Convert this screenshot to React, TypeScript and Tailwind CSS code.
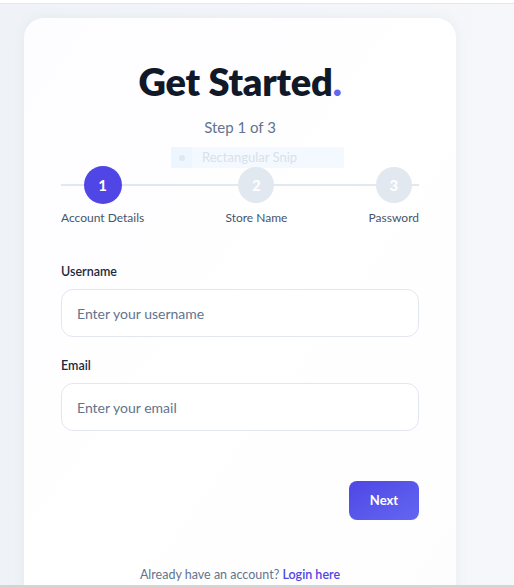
const steps = [
  { n: 1, label: 'Account Details', active: true },
  { n: 2, label: 'Store Name', active: false },
  { n: 3, label: 'Password', active: false },
]

function Field({ label, placeholder }: { label: string; placeholder: string }) {
  return (
    <div>
      <label className="block text-[12.5px] font-semibold text-slate-800 leading-4">
        {label}
      </label>
      <input
        placeholder={placeholder}
        className="mt-[9px] block w-full h-[48px] rounded-xl border border-[#e2e6f0] bg-white px-[15px] text-[14px] text-slate-700 placeholder:text-slate-500 outline-none"
      />
    </div>
  )
}

export default function App() {
  return (
    <div
      className="h-[587px] w-[514px] overflow-hidden flex flex-col bg-white"
      style={{ fontFamily: 'Lato, "Noto Sans", sans-serif' }}
    >
      <div className="h-[3px] shrink-0 border-b border-[#e5e7eb] box-content" />
      <div className="flex-1 min-h-0 overflow-hidden bg-gradient-to-r from-[#eff3f7] via-[#f2f5f9] to-[#f5f7fa] pl-6 pt-[14px]">
        <div className="relative w-[432px] h-[600px] rounded-[20px] bg-gradient-to-br from-[#fdfcff] via-white to-[#fefdfe] shadow-[0_0_12px_rgba(148,163,184,0.12)] px-[37px] pt-[41px]">
          <h1 className="text-center text-[38px] leading-[44px] font-extrabold text-[#111827] tracking-[-0.2px]">
            Get Started<span className="text-[#6366f1]">.</span>
          </h1>
          <p className="mt-[14px] text-center text-[15px] leading-5 text-slate-500">Step 1 of 3</p>

          {/* snipping tool leftover */}
          <div className="absolute left-[147px] top-[129px] flex h-[21px] w-[173px] items-center bg-[#eff6ff]/70 text-[13px] text-slate-300/70">
            <span className="flex h-full w-[21px] items-center justify-center bg-[#e8f1fd]/60">
              <span className="h-[6px] w-[6px] rounded-full bg-slate-200" />
            </span>
            <span className="ml-[10px]">Rectangular Snip</span>
          </div>

          <div className="relative mt-[29px]">
            <div className="absolute left-0 right-0 top-[18px] h-[2px] bg-[#e2e8f0]" />
            <div className="relative flex justify-between">
              {steps.map((s) => (
                <div key={s.n} className="flex flex-col items-center">
                  <div
                    className={
                      s.active
                        ? 'flex h-[38px] w-[38px] items-center justify-center rounded-full bg-[#4f46e5] text-[15px] font-bold text-white'
                        : 'flex h-[36px] w-[36px] my-[1px] items-center justify-center rounded-full bg-[#e2e8f0] text-[15px] font-bold text-white'
                    }
                  >
                    {s.n}
                  </div>
                  <span className="mt-[6px] text-[12px] leading-4 text-slate-600">{s.label}</span>
                </div>
              ))}
            </div>
          </div>

          <div className="mt-[38px] flex flex-col gap-[21px]">
            <Field label="Username" placeholder="Enter your username" />
            <Field label="Email" placeholder="Enter your email" />
          </div>

          <div className="mt-[50px] flex justify-end">
            <button className="h-[39px] w-[70px] rounded-lg bg-gradient-to-br from-[#4f46e5] to-[#6366f1] text-[13px] font-bold text-white">
              Next
            </button>
          </div>

          <p className="mt-[46px] text-center text-[12.5px] text-slate-500">
            Already have an account?{' '}
            <a className="font-semibold text-[#4f46e5]">Login here</a>
          </p>
        </div>
      </div>
      <div className="h-[2px] shrink-0 bg-[#d4d4d4]" />
    </div>
  )
}
